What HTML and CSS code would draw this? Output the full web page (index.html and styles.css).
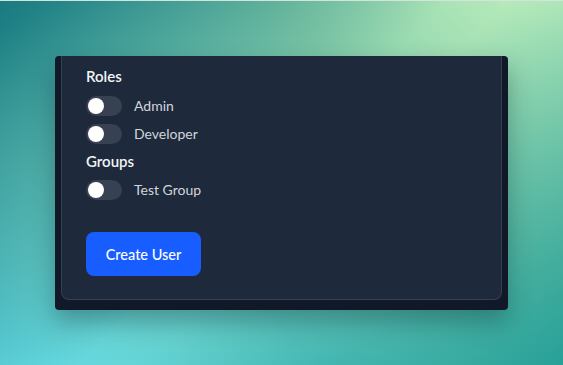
FILE: index.html
```html
<!DOCTYPE html>
<html lang="en">
<head>
<meta charset="utf-8">
<title>Create User</title>
<link rel="stylesheet" href="styles.css">
</head>
<body>
<div class="page">
  <div class="card">
    <div class="panel">
      <div class="heading">Roles</div>
      <div class="options">
        <label class="option"><span class="toggle"><span class="knob"></span></span><span class="label">Admin</span></label>
        <label class="option"><span class="toggle"><span class="knob"></span></span><span class="label">Developer</span></label>
      </div>
      <div class="heading heading-groups">Groups</div>
      <div class="options">
        <label class="option"><span class="toggle"><span class="knob"></span></span><span class="label">Test Group</span></label>
      </div>
      <button class="btn" type="button">Create User</button>
    </div>
  </div>
</div>
</body>
</html>
```
FILE: styles.css
```css
html, body {
  margin: 0;
  padding: 0;
}
body {
  width: 563px;
  height: 365px;
  overflow: hidden;
  font-family: Lato, "Noto Sans", sans-serif;
  background:
    radial-gradient(ellipse 300px 200px at 200px 180px, rgba(150, 215, 175, 0.4), rgba(150, 215, 175, 0) 100%),
    linear-gradient(135deg, rgba(22, 118, 124, 0.95) 0%, rgba(22, 118, 124, 0) 48%, rgba(30, 150, 148, 0) 55%, rgba(30, 155, 150, 0.9) 100%),
    linear-gradient(45deg, #68dde6 0%, #5cc8c4 35%, #88d0ab 68%, #c0f0bd 100%);
  border-top: 1px solid #d4e3dc;
  box-sizing: border-box;
}
.page {
  padding: 55px 0 0 55px;
}
.card {
  width: 453px;
  height: 254px;
  box-sizing: border-box;
  background: #111827;
  border-radius: 4px;
  padding: 0 6px 10px;
  box-shadow: 0 12px 24px rgba(10, 40, 50, 0.35);
  overflow: hidden;
}
.panel {
  height: 244px;
  box-sizing: border-box;
  background: #1e293b;
  border: 1px solid #334155;
  border-top: 0;
  border-radius: 0 0 8px 8px;
  padding: 10px 24px 0;
  display: flex;
  flex-direction: column;
  align-items: flex-start;
}
.heading {
  color: #f3f4f6;
  font-size: 15px;
  line-height: 20px;
  font-weight: 600;
  margin-bottom: 10px;
}
.heading-groups {
  margin-top: 7px;
  margin-bottom: 9px;
}
.options {
  display: flex;
  flex-direction: column;
  gap: 8px;
}
.option {
  display: flex;
  align-items: center;
  gap: 12px;
}
.toggle {
  width: 36px;
  height: 20px;
  border-radius: 10px;
  background: #374151;
  display: flex;
  align-items: center;
  padding: 0 2px;
  box-sizing: border-box;
}
.knob {
  width: 16px;
  height: 16px;
  border-radius: 50%;
  background: #ffffff;
}
.label {
  color: #d1d5db;
  font-size: 14px;
  line-height: 20px;
}
.btn {
  margin-top: 32px;
  width: 115px;
  height: 44px;
  border: 0;
  border-radius: 8px;
  background: #185dff;
  color: #ffffff;
  font-family: inherit;
  font-size: 14.5px;
  font-weight: 500;
  padding: 0;
}
```
